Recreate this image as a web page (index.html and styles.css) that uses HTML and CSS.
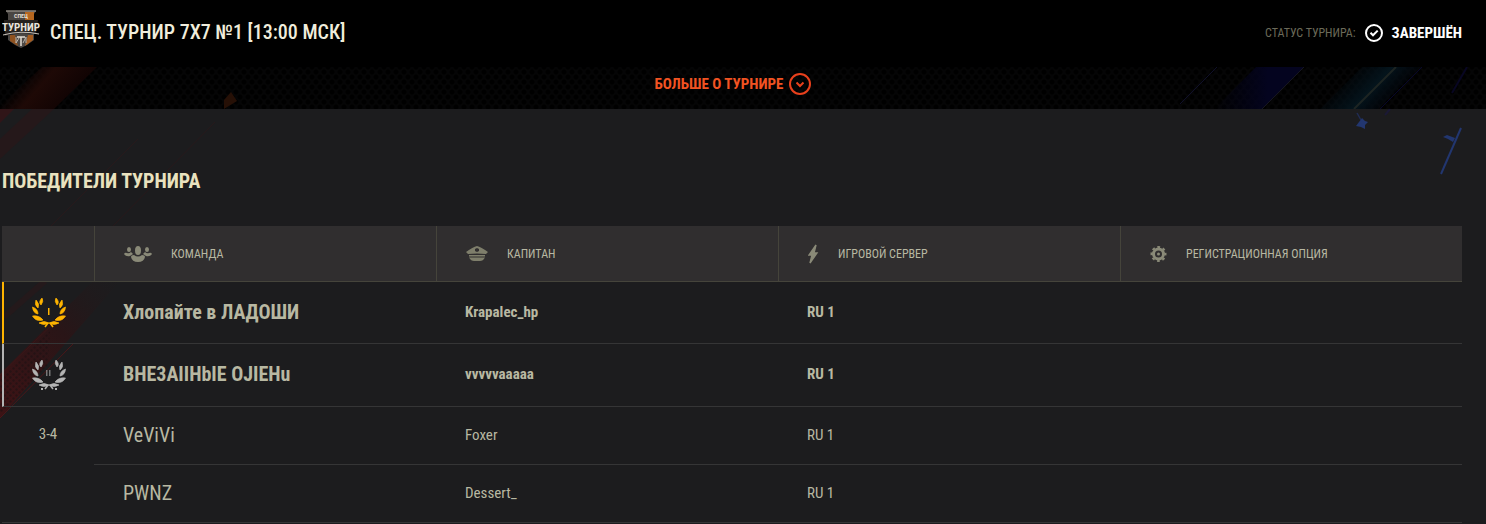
FILE: index.html
```html
<!DOCTYPE html>
<html lang="ru">
<head>
  <meta charset="UTF-8" />
  <meta name="viewport" content="width=device-width, initial-scale=1.0"/>
  <title>Спец. турнир 7x7 №1</title>
  <link rel="stylesheet" href="styles.css">
</head>
<body>

  <header class="header">
    <svg class="logo" width="38" height="40" viewBox="0 0 38 40" aria-hidden="true">
      <path d="M4 2 L34 2 L32 5 L32 31 L25 36 L19 39 L13 36 L6 31 L6 5 Z" fill="#4a4643"/>
      <path d="M23 3 H32 V12 H23 Z" fill="#b5661f"/>
      <path d="M8 26 L13 26 L16 37 L8 32 Z" fill="#8f5220"/>
      <path d="M31 26 L26 26 L23 37 L31 31 Z" fill="#a65d20"/>
      <path d="M4 2 H34" stroke="#8d8780" stroke-width="1.5"/>
      <path d="M2 11 H36 L34 25 L19 24 L3 27 Z" fill="#25211f"/>
      <text x="19" y="9" text-anchor="middle" font-size="6" font-weight="700" fill="#e3ddd3">СПЕЦ</text>
      <text x="19" y="22" text-anchor="middle" font-size="11" font-weight="700" fill="#e8e3dc">ТУРНИР</text>
      <path d="M1 26 Q19 21 37 25" stroke="#c9c3bb" fill="none"/>
      <path d="M14 28 V34 M24 28 V34 M14 34 L17 29 M24 28 L21 34" stroke="#b9b3ab" fill="none"/>
      <path d="M15 28 H23 M19 28 V37" stroke="#e3ddd3" stroke-width="1.5"/>
    </svg>
    <h1>СПЕЦ. ТУРНИР 7X7 №1 [13:00 МСК]</h1>
    <div class="status">
      <span class="status-label">СТАТУС ТУРНИРА:</span>
      <svg width="18" height="18" viewBox="0 0 18 18" fill="none" stroke="#fff" stroke-width="2" aria-hidden="true">
        <circle cx="9" cy="9" r="8"/>
        <path d="M5.5 8.8 L8 11.3 L12.7 6.6"/>
      </svg>
      <strong>ЗАВЕРШЁН</strong>
    </div>
  </header>

  <div class="more">
    <svg class="decor decor-left" width="400" height="42" viewBox="0 0 400 42" aria-hidden="true">
      <defs>
        <linearGradient id="redBeam" gradientUnits="userSpaceOnUse" x1="22" y1="12" x2="62" y2="46">
          <stop offset="0" stop-color="#200806" stop-opacity="0"/>
          <stop offset=".35" stop-color="#1e0906"/>
          <stop offset="1" stop-color="#0f0303"/>
        </linearGradient>
      </defs>
      <path d="M42 0 H97 L54 42 H-4 Z" fill="url(#redBeam)"/>
      <path d="M231 25 L237 34 L224 42 V33 Z" fill="#261006"/>
    </svg>
    <svg class="decor decor-right" width="306" height="42" viewBox="0 0 306 42" aria-hidden="true">
      <defs>
        <linearGradient id="blueBeam" x1="0" x2="1">
          <stop offset="0" stop-color="#03031a" stop-opacity="0"/>
          <stop offset=".6" stop-color="#04041f"/>
        </linearGradient>
        <linearGradient id="tealBeam" gradientUnits="userSpaceOnUse" x1="170" y1="0" x2="215" y2="42">
          <stop offset="0" stop-color="#03101a" stop-opacity="0"/>
          <stop offset=".5" stop-color="#04141c"/>
          <stop offset="1" stop-color="#02040f" stop-opacity="0"/>
        </linearGradient>
      </defs>
      <path d="M37 0 L0 37" stroke="#10102a"/>
      <path d="M76 0 H124 L82 42 H34 Z" fill="url(#blueBeam)"/>
      <path d="M124 0 L82 42" stroke="#16161f"/>
      <path d="M182 0 H240 L198 42 H140 Z" fill="url(#tealBeam)"/>
      <path d="M216 0 L174 42" stroke="#1d2422" stroke-width="2"/>
      <path d="M242 0 L200 42" stroke="#07072a"/>
      <path d="M287 0 L272 26" stroke="#080622" stroke-width="2"/>
    </svg>
    <button class="more-btn" type="button">
      БОЛЬШЕ О ТУРНИРЕ
      <svg width="22" height="22" viewBox="0 0 22 22" fill="none" stroke="#e8401c" stroke-width="2" aria-hidden="true">
        <circle cx="11" cy="11" r="10"/>
        <path d="M7.5 9.5 L11 13 L14.5 9.5"/>
      </svg>
    </button>
  </div>

  <main class="winners">
    <svg class="decor decor-left" width="400" height="415" viewBox="0 0 400 415" aria-hidden="true">
      <defs>
        <linearGradient id="band" gradientUnits="userSpaceOnUse" x1="0" y1="290" x2="130" y2="160">
          <stop offset="0" stop-color="#3c1315"/>
          <stop offset=".5" stop-color="#291517"/>
          <stop offset="1" stop-color="#1c1c1e" stop-opacity="0"/>
        </linearGradient>
        <pattern id="mesh" width="6" height="6" patternUnits="userSpaceOnUse">
          <circle cx="1.5" cy="1.5" r="1.2" fill="#1c1012"/>
          <circle cx="4.5" cy="4.5" r="1.2" fill="#1c1012"/>
        </pattern>
      </defs>
      <path d="M0 0 H14 L0 14 Z" fill="#301518"/>
      <path d="M32 0 H54 L0 50 V30 Z" fill="#25181a"/>
      <path d="M138 30 L50 118 M215 13 L112 118" stroke="#27191b"/>
      <path d="M45 172 L4 208" stroke="#24191b" stroke-width="6"/>
      <path d="M0 265 L110 155 H135 L0 309 Z" fill="url(#band)"/>
      <path d="M0 268 L50 222 L48 256 L0 306 Z" fill="url(#mesh)" opacity=".6"/>
      <path d="M0 309 L74 234" stroke="#4c1719"/>
      <path d="M0 266 L60 208" stroke="#3a1719"/>
    </svg>
    <svg class="decor decor-right" width="306" height="80" viewBox="0 0 306 80" aria-hidden="true">
      <path d="M177 4 L181 11" stroke="#202c54" stroke-width="1.5"/>
      <path d="M182 9 L185 12 L188 13 L185 16 L185 20 L181 18 L176 17 L179 13 Z" fill="#22366f"/>
      <path d="M281 19 L261 65" stroke="#22366f" stroke-width="2"/>
      <path d="M263 28 L267 26 L275 29 L273 33 L268 30 Z" fill="#22366f"/>
      <path d="M210 0 L205 6" stroke="#1b1935" stroke-width="2"/>
    </svg>

    <h2>ПОБЕДИТЕЛИ ТУРНИРА</h2>

    <table class="results">
      <thead>
        <tr>
          <th class="place"></th>
          <th>
            <div class="th-inner">
              <svg width="28" height="16" viewBox="0 0 28 16" fill="#8a8a78" aria-hidden="true">
                <ellipse cx="14" cy="4.5" rx="3" ry="4.5"/>
                <path d="M7 11 Q7 9 10 9 Q14 12 18 9 Q21 9 21 11 Q20 16 14 16 Q8 16 7 11 Z"/>
                <ellipse cx="5" cy="3.5" rx="2" ry="2.5"/>
                <ellipse cx="23" cy="3.5" rx="2" ry="2.5"/>
                <path d="M0 8 Q1 6 3 7 Q5 8 7 6 L9 8 L6 10 Q2 11 0 8 Z"/>
                <path d="M28 8 Q27 6 25 7 Q23 8 21 6 L19 8 L22 10 Q26 11 28 8 Z"/>
              </svg>
              КОМАНДА
            </div>
          </th>
          <th>
            <div class="th-inner">
              <svg width="22" height="15" viewBox="0 0 22 15" aria-hidden="true">
                <path d="M11 0 Q15 1 22 6 L20 8 Q11 7 2 8 L0 6 Q7 1 11 0 Z" fill="#7e7e6b"/>
                <path d="M3 9 H19 V10.5 H3 Z M3 11.5 H19 Q17 15 14 15 H8 Q5 15 3 11.5 Z" fill="#7e7e6b"/>
                <path d="M9 3 L11 2 L13 3 V5 L11 6 L9 5 Z" fill="#302e2f"/>
              </svg>
              КАПИТАН
            </div>
          </th>
          <th>
            <div class="th-inner">
              <svg width="11" height="20" viewBox="0 0 11 20" aria-hidden="true">
                <path d="M8 1 L1 11 H4 L2 19 L9 9 H6 Z" fill="#8a8a78" stroke="#8a8a78" stroke-width="1.4"/>
              </svg>
              ИГРОВОЙ СЕРВЕР
            </div>
          </th>
          <th>
            <div class="th-inner">
              <svg width="17" height="16" viewBox="0 0 17 16" aria-hidden="true">
                <circle cx="8.5" cy="8" r="5" fill="none" stroke="#8a8a78" stroke-width="3"/>
                <circle cx="8.5" cy="8" r="7" fill="none" stroke="#8a8a78" stroke-width="2" stroke-dasharray="2.75" stroke-dashoffset="1.375"/>
                <circle cx="8.5" cy="8" r="1.5" fill="#8a8a78"/>
              </svg>
              РЕГИСТРАЦИОННАЯ ОПЦИЯ
            </div>
          </th>
        </tr>
      </thead>
      <tbody>
        <tr class="top first">
          <td class="place">
            <svg class="wreath" width="34" height="30" viewBox="0 0 34 30" aria-label="1">
              <g id="branch" stroke="currentColor" stroke-width=".7">
                <path d="M10 0 Q12 3 9 7 Q6 4 10 0 Z"/>
                <path d="M4 2 Q8 6 6 10 Q2 7 4 2 Z"/>
                <path d="M.5 9 Q6 11 6 16 Q1 15 .5 9 Z"/>
                <path d="M.5 18 Q7 17 11 22 Q4 24 .5 18 Z"/>
                <path d="M7 25 Q12 22 17 25 Q12 28 7 25 Z"/>
                <path d="M16 25 L13 29" stroke-width="1.5"/>
              </g>
              <use href="#branch" transform="matrix(-1 0 0 1 34 0)"/>
              <path d="M16 10 H17.5 V17 H16 Z"/>
            </svg>
          </td>
          <td class="team">Хлопайте в ЛАДОШИ</td>
          <td>Krapalec_hp</td>
          <td>RU 1</td>
          <td></td>
        </tr>
        <tr class="top second">
          <td class="place">
            <svg class="wreath" width="34" height="30" viewBox="0 0 34 30" aria-label="2">
              <use href="#branch"/>
              <use href="#branch" transform="matrix(-1 0 0 1 34 0)"/>
              <path d="M14 10 H15.5 V16 H14 Z M17 10 H18.5 V16 H17 Z" opacity=".6"/>
              <path d="M9 28 H11 V30 H9 Z M23 28 H25 V30 H23 Z"/>
            </svg>
          </td>
          <td class="team">BHE3AIIHbIE OJIEHu</td>
          <td>vvvvvaaaaa</td>
          <td>RU 1</td>
          <td></td>
        </tr>
        <tr>
          <td class="place" rowspan="2">3-4</td>
          <td class="team">VeViVi</td>
          <td>Foxer</td>
          <td>RU 1</td>
          <td></td>
        </tr>
        <tr>
          <td class="team">PWNZ</td>
          <td>Dessert_</td>
          <td>RU 1</td>
          <td></td>
        </tr>
      </tbody>
    </table>
  </main>

</body>
</html>
```

FILE: styles.css
```css
* {
  box-sizing: border-box;
}

body {
  margin: 0;
  font-family: 'Roboto Condensed', Roboto, 'Liberation Sans', sans-serif;
  font-size: 15px;
  color: #b8b8a2;
  background-color: #1c1c1e;
}

.header {
  display: flex;
  align-items: center;
  padding: 0 24px 0 2px;
  height: 67px;
  background: #000;
}

.logo {
  margin-bottom: 10px;
}

.header h1 {
  margin: 0 0 4px 10px;
  font-size: 20px;
  line-height: 24px;
  font-weight: 500;
  color: #f0eddc;
}

.status {
  display: flex;
  align-items: center;
  gap: 9px;
  margin-left: auto;
  margin-bottom: 2px;
}

.status-label {
  font-size: 12px;
  color: #6b6a59;
}

.status strong {
  font-size: 15px;
  color: #fff;
}

.more {
  position: relative;
  display: flex;
  justify-content: center;
  padding-right: 20px;
  height: 42px;
  background-color: #050506;
  background-image:
    radial-gradient(circle, #000 2px, transparent 3px),
    radial-gradient(circle, #000 2px, transparent 3px);
  background-size: 8px 10px;
  background-position: 0 0, 4px 5px;
}

.decor {
  position: absolute;
  top: 0;
  z-index: 0;
  pointer-events: none;
}

.decor-left {
  left: 0;
}

.decor-right {
  right: 0;
}

.more-btn {
  position: relative;
  display: flex;
  align-items: center;
  gap: 6px;
  margin: 0 0 8px;
  padding: 0;
  border: none;
  background: none;
  font-family: inherit;
  font-size: 15px;
  font-weight: 700;
  color: #f25322;
  cursor: pointer;
}

.winners {
  position: relative;
  padding: 60px 24px 0 2px;
}

.winners h2 {
  position: relative;
  margin: 0 0 33px;
  font-size: 20px;
  line-height: 24px;
  font-weight: 700;
  color: #e9e2bf;
}

.results {
  position: relative;
  width: 100%;
  table-layout: fixed;
  border-collapse: separate;
  border-spacing: 0;
}

.results th {
  height: 56px;
  padding: 0 0 0 29px;
  border-left: 1px solid #45443b;
  border-bottom: 1px solid #45443b;
  background: #302e2f;
  font-size: 12px;
  font-weight: 400;
  text-align: left;
}

.results th.place {
  width: 92px;
  border-left: none;
}

.th-inner {
  display: flex;
  align-items: center;
  gap: 19px;
}

.results td {
  height: 58px;
  padding: 0 0 2px 29px;
  border-bottom: 1px solid #353536;
}

.results td.place {
  padding: 0;
  text-align: center;
}

.results td[rowspan] {
  padding-top: 18px;
  vertical-align: top;
}

.results .team {
  font-size: 20px;
}

.results .top td {
  height: 62px;
  font-weight: 700;
}

.results .second td {
  height: 63px;
}

.wreath {
  display: block;
  margin: 0 auto;
  fill: currentColor;
}

.first td.place {
  border-left: 2px solid #ffb400;
  color: #ffb400;
}

.second td.place {
  border-left: 2px solid #b4b4b4;
  color: #b4b4b4;
}
```
